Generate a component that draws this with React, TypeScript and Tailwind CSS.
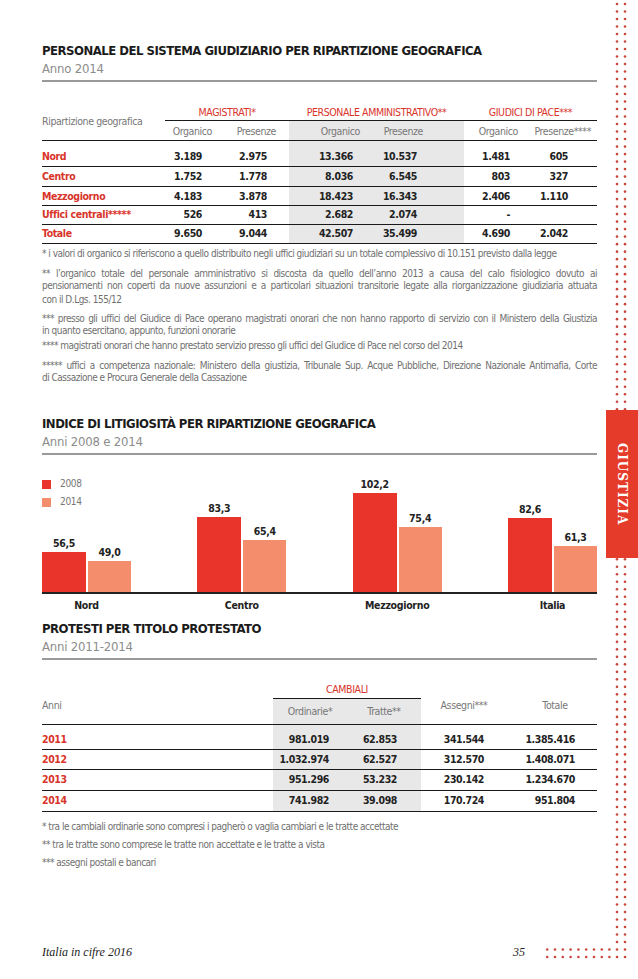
import React from "react";

const t1Rows = [
  ["Nord", "3.189", "2.975", "13.366", "10.537", "1.481", "605"],
  ["Centro", "1.752", "1.778", "8.036", "6.545", "803", "327"],
  ["Mezzogiorno", "4.183", "3.878", "18.423", "16.343", "2.406", "1.110"],
  ["Uffici centrali*****", "526", "413", "2.682", "2.074", "-", ""],
  ["Totale", "9.650", "9.044", "42.507", "35.499", "4.690", "2.042"],
];
const t1Sub = ["Organico", "Presenze", "Organico", "Presenze", "Organico", "Presenze****"];
const t1Num = ["pr-[25px]", "pr-[22px]", "pr-[23px]", "pr-[47px]", "pr-[20px]", "pr-[29px]"];
const t1Head = ["pr-[15px]", "pr-[13px]", "pr-[16px]", "pr-[41px]", "pr-[12px]", "pr-[6px]"];
const t1RowH = ["h-[25px] pt-[7px]", "h-[19px] pt-[1px]", "h-[18px] pt-[1px]", "h-[18px]", "h-[18px]"];

const t3Rows = [
  ["2011", "981.019", "62.853", "341.544", "1.385.416"],
  ["2012", "1.032.974", "62.527", "312.570", "1.408.071"],
  ["2013", "951.296", "53.232", "230.142", "1.234.670"],
  ["2014", "741.982", "39.098", "170.724", "951.804"],
];
const t3Num = ["pr-[18px]", "pr-[24px]", "pr-[23px]", "pr-[22px]"];
const t3RowH = ["h-[24px] pt-[5px]", "h-[19px]", "h-[20px]", "h-[20px]"];

const chart = [
  { label: "Nord", a: 56.5, b: 49.0 },
  { label: "Centro", a: 83.3, b: 65.4 },
  { label: "Mezzogiorno", a: 102.2, b: 75.4 },
  { label: "Italia", a: 82.6, b: 61.3 },
];
const barH = (v: number) => Math.round(1.284 * (v - 25.1));
const fmt = (v: number) => v.toFixed(1).replace(".", ",");

// dotted column on the right edge
const dotRows = Array.from({ length: 128 }, (_, k) => 4 + k * 7.504);
const footDots = Array.from({ length: 8 }, (_, i) => 1.2 + i * 7.8);

function SectionHead({ title, sub }: { title: string; sub: string }) {
  return (
    <div>
      <h2 className="text-[13px] leading-[17px] font-bold tracking-[-0.5px] text-[#1b1b1b]">{title}</h2>
      <p className="mt-[2px] text-[13px] leading-[16px] tracking-[-0.2px] text-[#8c8c8c]">{sub}</p>
      <div className="mt-[3px] h-[2px] bg-[#9a9a9a]" />
    </div>
  );
}

function Note({ children, full, className = "" }: { children: React.ReactNode; full?: boolean; className?: string }) {
  return (
    <p
      className={
        "text-[10px] leading-[12px] tracking-[-0.5px] text-[#707070] " +
        (full ? "text-justify [text-align-last:justify] " : "") +
        className
      }
    >
      {children}
    </p>
  );
}

const App = () => {
  return (
    <div className="w-[638px] h-[979px] bg-white flex overflow-hidden [font-family:'DejaVu_Sans_Condensed','DejaVu_Sans',sans-serif]">
      <main className="w-[606px] h-full pl-[42px] pr-[9px] pt-[42px] flex flex-col">
        <SectionHead title="PERSONALE DEL SISTEMA GIUDIZIARIO PER RIPARTIZIONE GEOGRAFICA" sub="Anno 2014" />

        {/* tabella personale */}
        <div className="mt-[20px] text-[10.5px] tracking-[-0.4px]">
          <div className="grid grid-cols-[123px_62px_62px_87px_88px_66px_67px] grid-rows-[19px_20px]">
            <div className="row-span-2 pt-[2px] flex items-center text-[#777] border-b border-[#1a1a1a]">Ripartizione geografica</div>
            <div className="col-span-2 pt-[3px] flex items-center justify-center text-[#d8342a] border-b border-[#1a1a1a]">MAGISTRATI*</div>
            <div className="col-span-2 pt-[3px] flex items-center justify-center text-[#d8342a] border-b border-[#1a1a1a]">PERSONALE AMMINISTRATIVO**</div>
            <div className="col-span-2 pt-[3px] flex items-center justify-center text-[#d8342a] border-b border-[#1a1a1a]">GIUDICI DI PACE***</div>
            {t1Sub.map((s, i) => (
              <div
                key={i}
                className={
                  "pt-[2px] flex items-center justify-end text-[#777] border-b border-[#1a1a1a] " +
                  t1Head[i] +
                  (i === 2 || i === 3 ? " bg-[#e8e8e8]" : "")
                }
              >
                {s}
              </div>
            ))}
          </div>
          {t1Rows.map((r, ri) => (
            <div key={ri} className="grid grid-cols-[123px_62px_62px_87px_88px_66px_67px] border-b border-[#1a1a1a]">
              {r.map((c, ci) => (
                <div
                  key={ci}
                  className={
                    t1RowH[ri] +
                    " flex items-center " +
                    (ci === 0
                      ? "font-bold text-[#d8342a]"
                      : "justify-end font-bold text-[#222] " + t1Num[ci - 1]) +
                    (ci === 3 || ci === 4 ? " bg-[#e8e8e8]" : "")
                  }
                >
                  {c}
                </div>
              ))}
            </div>
          ))}
        </div>

        <div className="mt-[4px] flex flex-col">
          <Note>* i valori di organico si riferiscono a quello distribuito negli uffici giudiziari su un totale complessivo di 10.151 previsto dalla legge</Note>
          <Note full className="mt-[8px]">** l’organico totale del personale amministrativo si discosta da quello dell’anno 2013 a causa del calo fisiologico dovuto ai</Note>
          <Note full>pensionamenti non coperti da nuove assunzioni e a particolari situazioni transitorie legate alla riorganizzazione giudiziaria attuata</Note>
          <Note className="mt-[2px]">con il D.Lgs. 155/12</Note>
          <Note full className="mt-[7px]">*** presso gli uffici del Giudice di Pace operano magistrati onorari che non hanno rapporto di servizio con il Ministero della Giustizia</Note>
          <Note>in quanto esercitano, appunto, funzioni onorarie</Note>
          <Note className="mt-[3px]">**** magistrati onorari che hanno prestato servizio presso gli uffici del Giudice di Pace nel corso del 2014</Note>
          <Note full className="mt-[8px]">***** uffici a competenza nazionale: Ministero della giustizia, Tribunale Sup. Acque Pubbliche, Direzione Nazionale Antimafia, Corte</Note>
          <Note>di Cassazione e Procura Generale della Cassazione</Note>
        </div>

        {/* grafico */}
        <div className="mt-[31px]">
          <SectionHead title="INDICE DI LITIGIOSITÀ PER RIPARTIZIONE GEOGRAFICA" sub="Anni 2008 e 2014" />
        </div>
        <div className="h-[139px] flex justify-between border-b-2 border-[#222]">
          {chart.map((g, gi) => (
            <div key={gi} className="w-[89px] h-full flex flex-col justify-end">
              {gi === 0 && (
                <div className="mt-[23px] mb-auto flex flex-col gap-[6px] text-[10px] leading-[12px] tracking-[-0.3px] text-[#777]">
                  <div className="flex items-center gap-[9px]">
                    <span className="w-[9px] h-[9px] bg-[#e8342a]" />
                    2008
                  </div>
                  <div className="flex items-center gap-[9px]">
                    <span className="w-[9px] h-[9px] bg-[#f48d6c]" />
                    2014
                  </div>
                </div>
              )}
              <div className="flex items-end gap-[2px]">
                <div className="w-[44px] flex flex-col items-center">
                  <span className="mb-[3px] text-[10.5px] leading-[12px] font-bold tracking-[-0.3px] text-[#222]">{fmt(g.a)}</span>
                  <div className="w-full bg-[#e8342a]" style={{ height: barH(g.a) }} />
                </div>
                <div className="w-[43px] flex flex-col items-center">
                  <span className="mb-[3px] text-[10.5px] leading-[12px] font-bold tracking-[-0.3px] text-[#222]">{fmt(g.b)}</span>
                  <div className="w-full bg-[#f48d6c]" style={{ height: barH(g.b) }} />
                </div>
              </div>
            </div>
          ))}
        </div>
        <div className="pt-[5px] flex justify-between">
          {chart.map((g, gi) => (
            <span key={gi} className="w-[89px] text-center text-[10.5px] leading-[13px] font-bold tracking-[-0.3px] text-[#222]">
              {g.label}
            </span>
          ))}
        </div>

        {/* protesti */}
        <div className="mt-[8px]">
          <SectionHead title="PROTESTI PER TITOLO PROTESTATO" sub="Anni 2011-2014" />
        </div>
        <div className="mt-[19px] text-[10.5px] tracking-[-0.4px]">
          <div className="grid grid-cols-[231px_74px_74px_86px_90px] grid-rows-[20px_26px]">
            <div className="row-span-2 pt-[8px] flex items-center text-[#777] border-b border-[#1a1a1a]">Anni</div>
            <div className="col-span-2 pt-[2px] flex items-center justify-center text-[#d8342a] border-b border-[#1a1a1a]">CAMBIALI</div>
            <div className="row-span-2 pt-[8px] flex items-center justify-center text-[#777] border-b border-[#1a1a1a]">Assegni***</div>
            <div className="row-span-2 pt-[8px] flex items-center justify-center pl-[6px] text-[#777] border-b border-[#1a1a1a]">Totale</div>
            <div className="flex items-center justify-center text-[#777] bg-[#e8e8e8] border-b border-[#1a1a1a]">Ordinarie*</div>
            <div className="flex items-center justify-center text-[#777] bg-[#e8e8e8] border-b border-[#1a1a1a]">Tratte**</div>
          </div>
          {t3Rows.map((r, ri) => (
            <div key={ri} className="grid grid-cols-[231px_74px_74px_86px_90px] border-b border-[#1a1a1a]">
              {r.map((c, ci) => (
                <div
                  key={ci}
                  className={
                    t3RowH[ri] +
                    " flex items-center " +
                    (ci === 0
                      ? "font-bold text-[#d8342a]"
                      : "justify-end font-bold text-[#222] " + t3Num[ci - 1]) +
                    (ci === 1 || ci === 2 ? " bg-[#e8e8e8]" : "")
                  }
                >
                  {c}
                </div>
              ))}
            </div>
          ))}
        </div>
        <div className="mt-[9px] flex flex-col gap-[6px]">
          <Note>* tra le cambiali ordinarie sono compresi i pagherò o vaglia cambiari e le tratte accettate</Note>
          <Note>** tra le tratte sono comprese le tratte non accettate e le tratte a vista</Note>
          <Note>*** assegni postali e bancari</Note>
        </div>

        <footer className="mt-auto mb-[19px] -mr-[9px] h-[16px] flex items-center [font-family:'Liberation_Serif',serif] italic text-[12px] text-[#222]">
          <span className="flex-1">Italia in cifre 2016</span>
          <span className="mr-[21px]">35</span>
          <svg width="60" height="16" className="shrink-0">
            {footDots.map((x, i) => (
              <g key={i}>
                <circle cx={x} cy={5.5} r={1.3} fill="#c9463d" />
                <circle cx={x} cy={13} r={1.3} fill="#c9463d" />
              </g>
            ))}
          </svg>
        </footer>
      </main>

      <aside className="relative w-[32px] h-full">
        <svg width="32" height="979" className="absolute inset-0">
          {dotRows.map((y, k) => (
            <g key={k}>
              <circle cx={11} cy={y} r={1.3} fill="#c9463d" />
              <circle cx={19} cy={y} r={1.3} fill="#c9463d" />
            </g>
          ))}
          <circle cx={3.4} cy={949.5} r={1.3} fill="#c9463d" />
          <circle cx={3.4} cy={957} r={1.3} fill="#c9463d" />
        </svg>
        <div className="relative mt-[410px] h-[148px] bg-[#e53b2b] flex items-center justify-center">
          <span className="[writing-mode:vertical-rl] [font-family:'DejaVu_Serif',serif] font-bold text-[12px] tracking-[1px] text-white">
            GIUSTIZIA
          </span>
        </div>
      </aside>
    </div>
  );
};

export default App;
